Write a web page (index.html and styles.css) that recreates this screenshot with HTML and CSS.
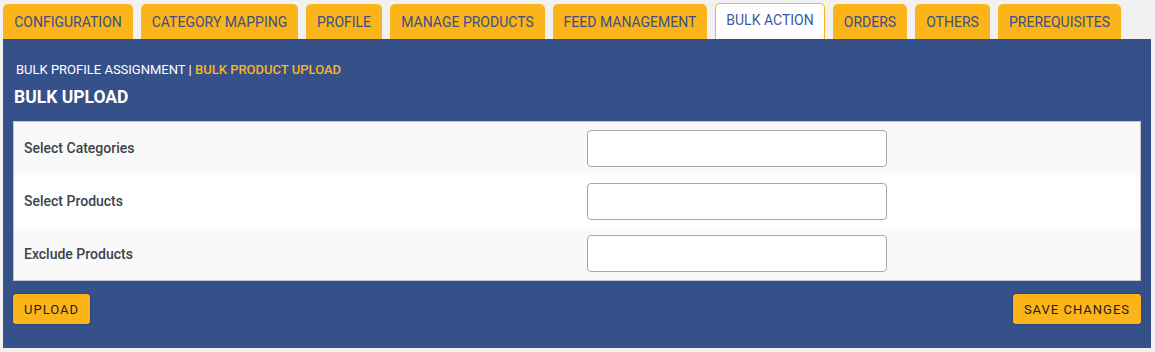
FILE: index.html
```html
<!DOCTYPE html>
<html>
<head>
<meta charset="utf-8">
<link rel="stylesheet" href="styles.css">
</head>
<body>
<div class="wrap">
  <nav class="tabs">
    <a class="tab">CONFIGURATION</a>
    <a class="tab">CATEGORY MAPPING</a>
    <a class="tab">PROFILE</a>
    <a class="tab">MANAGE PRODUCTS</a>
    <a class="tab">FEED MANAGEMENT</a>
    <a class="tab active">BULK ACTION</a>
    <a class="tab">ORDERS</a>
    <a class="tab">OTHERS</a>
    <a class="tab">PREREQUISITES</a>
  </nav>
  <div class="panel">
    <div class="crumbs"><span>BULK PROFILE ASSIGNMENT</span> | <span class="current">BULK PRODUCT UPLOAD</span></div>
    <h2 class="title">BULK UPLOAD</h2>
    <table class="form">
      <tr class="odd"><th>Select Categories</th><td><input class="field" type="text"></td></tr>
      <tr><th>Select Products</th><td><input class="field" type="text"></td></tr>
      <tr class="odd"><th>Exclude Products</th><td><input class="field" type="text"></td></tr>
    </table>
    <div class="actions">
      <button class="btn">UPLOAD</button>
      <button class="btn">SAVE CHANGES</button>
    </div>
  </div>
</div>
</body>
</html>
```
FILE: styles.css
```css
* { box-sizing: border-box; }
html, body { margin: 0; padding: 0; background: #f1f1f1; }
body { font-family: Roboto, "Liberation Sans", Arial, sans-serif; }
.wrap { padding: 3px 4px 0 3px; width: 1155px; }
.tabs { display: flex; gap: 8px; align-items: flex-end; height: 36px; }
.tab {
  display: flex; align-items: center; justify-content: center;
  height: 35px; padding: 1px 0 0; background: #fbb419; color: #3c4f86;
  font-size: 14px; border-radius: 5px 5px 0 0;
}
.tab:nth-child(1) { width: 130px; }
.tab:nth-child(2) { width: 157px; }
.tab:nth-child(3) { width: 76px; }
.tab:nth-child(4) { width: 155px; }
.tab:nth-child(5) { width: 154px; }
.tab:nth-child(6) { width: 110px; }
.tab:nth-child(7) { width: 74px; }
.tab:nth-child(8) { width: 75px; }
.tab:nth-child(9) { width: 123px; }
.tab.active {
  background: #fff; border: 1px solid #fbb419; border-bottom: none;
  height: 36px; padding: 0 0 3px; color: #3c5aa0;
}
.panel { background: #365089; width: 1148px; padding: 23px 10px 24px 10px; }
.crumbs { color: #fff; font-size: 13px; padding-left: 3px; line-height: 15px; }
.crumbs .current { color: #fbb419; font-weight: 500; }
.title { margin: 9px 0 0 1px; color: #fff; font-size: 17.5px; font-weight: 700; line-height: 22px; }
.form {
  margin-top: 13px; width: 1128px; border-collapse: collapse; border: 1px solid #c3c4c7;
  background: #fff; table-layout: fixed;
}
.form tr.odd { background: #f9f9f9; }
.form th {
  width: 50%; text-align: left; padding: 0 10px; font-size: 14px; font-weight: 500;
  color: #3c434a; height: 53px;
}
.form td { padding: 0 10px; height: 53px; }
.field {
  display: block; width: 300px; height: 37px; border: 1px solid #a7a7a7; border-radius: 4px;
  background: #fff; margin: 0;
}
.actions { display: flex; justify-content: space-between; margin-top: 13px; }
.btn {
  height: 30px; padding: 0 11px; background: #fbb419; color: #1d1d1d; border: none;
  border-radius: 3px; font-family: Roboto, "Liberation Sans", Arial, sans-serif;
  font-size: 13px; letter-spacing: 1px; box-shadow: 0 0 2px rgba(0,0,0,0.45);
}
```
